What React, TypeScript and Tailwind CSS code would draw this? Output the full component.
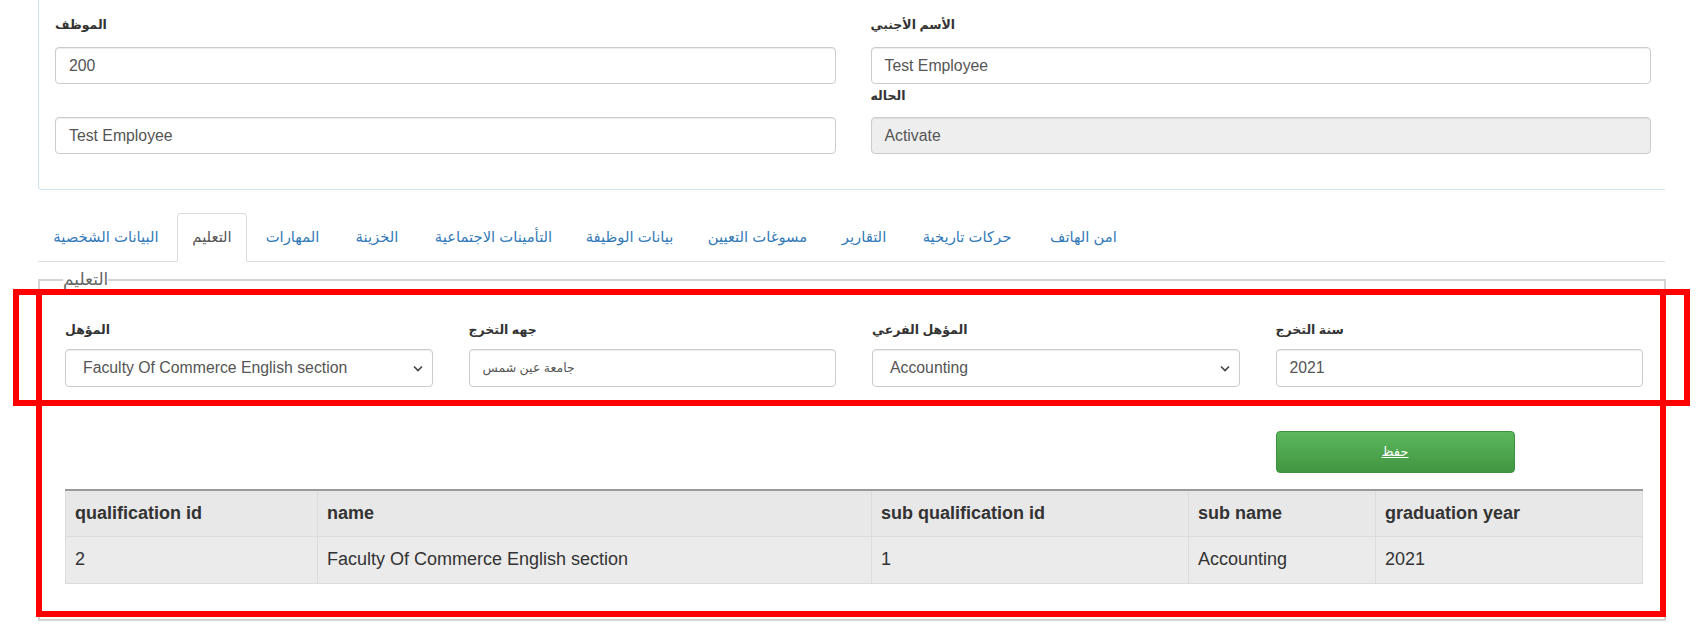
import { ReactNode } from 'react';

const tabs = [
  { label: 'البيانات الشخصية', w: 'w-[136px]' },
  { label: 'التعليم', w: 'w-[70px]', active: true },
  { label: 'المهارات', w: 'w-[85px]' },
  { label: 'الخزينة', w: 'w-[78px]' },
  { label: 'التأمينات الاجتماعية', w: 'w-[149px]' },
  { label: 'بيانات الوظيفة', w: 'w-[117px]' },
  { label: 'مسوغات التعيين', w: 'w-[133px]' },
  { label: 'التقارير', w: 'w-[74px]' },
  { label: 'حركات تاريخية', w: 'w-[126px]' },
  { label: 'امن الهاتف', w: 'w-[101px]' },
];

const columns = [
  { title: 'qualification id', w: 'w-[252px]', value: '2' },
  { title: 'name', w: 'w-[554px]', value: 'Faculty Of Commerce English section' },
  { title: 'sub qualification id', w: 'w-[317px]', value: '1' },
  { title: 'sub name', w: 'w-[187px]', value: 'Accounting' },
  { title: 'graduation year', w: 'w-[267px]', value: '2021' },
];

function Label({ children }: { children?: ReactNode }) {
  return <div className="h-[22px] leading-[22px] text-[12.5px] font-bold text-[#333]">{children}</div>;
}

function TextBox({
  value,
  disabled,
  tall,
  arabic,
}: {
  value: string;
  disabled?: boolean;
  tall?: boolean;
  arabic?: boolean;
}) {
  return (
    <div
      className={`${tall ? 'h-[38px]' : 'h-[37px]'} w-full flex items-center px-[13px] border border-[#ccc] rounded-[4px] text-[#555] shadow-[inset_0_1px_1px_rgba(0,0,0,0.075)] ${
        disabled ? 'bg-[#eee]' : 'bg-white'
      } ${arabic ? 'text-[12.5px]' : 'text-[15.8px]'}`}
    >
      <span className="whitespace-nowrap">{value}</span>
    </div>
  );
}

function SelectBox({ value }: { value: string }) {
  return (
    <div className="h-[38px] w-full flex items-center justify-between pl-[17px] pr-[9px] border border-[#ccc] rounded-[4px] bg-white text-[15.8px] text-[#555] shadow-[inset_0_1px_1px_rgba(0,0,0,0.075)]">
      <span className="whitespace-nowrap">{value}</span>
      <svg width="10" height="7" viewBox="0 0 10 7" className="mt-[1px]">
        <path d="M1 1.5 L5 5.5 L9 1.5" fill="none" stroke="#444" strokeWidth="1.6" />
      </svg>
    </div>
  );
}

export default function App() {
  return (
    <div className="relative w-[1703px] h-[636px] overflow-hidden bg-white font-['Liberation_Sans','DejaVu_Sans',sans-serif]">
      {/* employee header panel */}
      <div className="ml-[38px] w-[1627px] grid grid-cols-2 gap-x-[35px] pl-[16px] pr-[14px] pt-[14px] pb-[35px] border-l border-b border-[#cfe5f1] rounded-bl-[4px]">
        <div className="flex flex-col">
          <div className="mb-[11px]">
            <Label>الموظف</Label>
          </div>
          <TextBox value="200" />
          <div className="mt-[1px] mb-[10px]">
            <Label />
          </div>
          <TextBox value="Test Employee" />
        </div>
        <div className="flex flex-col">
          <div className="mb-[11px]">
            <Label>الأسم الأجنبي</Label>
          </div>
          <TextBox value="Test Employee" />
          <div className="mt-[1px] mb-[10px]">
            <Label>الحاله</Label>
          </div>
          <TextBox value="Activate" disabled />
        </div>
      </div>

      {/* tabs */}
      <div className="mt-[23px] ml-[38px] w-[1627px] h-[49px] flex border-b border-[#ddd]">
        {tabs.map((t) => (
          <div
            key={t.label}
            className={`${t.w} h-[49px] mr-[3px] flex items-center justify-center whitespace-nowrap text-[14.8px] rounded-t-[4px] border ${
              t.active ? 'border-[#ddd] border-b-white bg-white text-[#555]' : 'border-transparent text-[#337ab7]'
            }`}
          >
            {t.label}
          </div>
        ))}
      </div>

      {/* education fieldset */}
      <fieldset className="mt-[7px] ml-[38px] w-[1627px] border-2 border-[#d4d4d4] pl-[25px] pr-[21px] pt-[28px] pb-[35px]">
        <legend className="-ml-[2px] text-[17px] leading-[22px] text-[#666]">التعليم</legend>
        <div className="grid grid-cols-4 gap-x-[36px]">
          <div>
            <div className="mb-[8px]">
              <Label>المؤهل</Label>
            </div>
            <SelectBox value="Faculty Of Commerce English section" />
          </div>
          <div>
            <div className="mb-[8px]">
              <Label>جهه التخرج</Label>
            </div>
            <TextBox value="جامعة عين شمس" tall arabic />
          </div>
          <div>
            <div className="mb-[8px]">
              <Label>المؤهل الفرعي</Label>
            </div>
            <SelectBox value="Accounting" />
          </div>
          <div>
            <div className="mb-[8px]">
              <Label>سنة التخرج</Label>
            </div>
            <TextBox value="2021" tall />
          </div>
        </div>

        <div className="mt-[44px] grid grid-cols-4 gap-x-[36px]">
          <div className="col-start-4">
            <button className="w-[239px] h-[42px] rounded-[4px] border border-[#3e8f3e] bg-gradient-to-b from-[#5cb85c] to-[#419641] text-white text-[13px] underline">
              حفظ
            </button>
          </div>
        </div>

        <table className="mt-[16px] w-[1577px] table-fixed border-collapse text-[18px] text-[#333]">
          <thead>
            <tr className="h-[46px] bg-[#e8e8e8] border-t-2 border-[#9a9a9a]">
              {columns.map((c) => (
                <th key={c.title} className={`${c.w} px-[9px] text-left font-bold border-l border-r border-[#dcdcdc]`}>
                  {c.title}
                </th>
              ))}
            </tr>
          </thead>
          <tbody>
            <tr className="h-[47px] bg-[#ebebeb] border-t border-b border-[#dcdcdc]">
              {columns.map((c) => (
                <td key={c.title} className="px-[9px] border-l border-r border-[#dcdcdc]">
                  {c.value}
                </td>
              ))}
            </tr>
          </tbody>
        </table>
      </fieldset>

      {/* red highlight annotations */}
      <div className="pointer-events-none absolute left-[13px] top-[289px] w-[1677px] h-[117px] border-[6px] border-[#ff0000]" />
      <div className="pointer-events-none absolute left-[36px] top-[289px] w-[1630px] h-[328px] border-[6px] border-[#ff0000]" />
    </div>
  );
}
